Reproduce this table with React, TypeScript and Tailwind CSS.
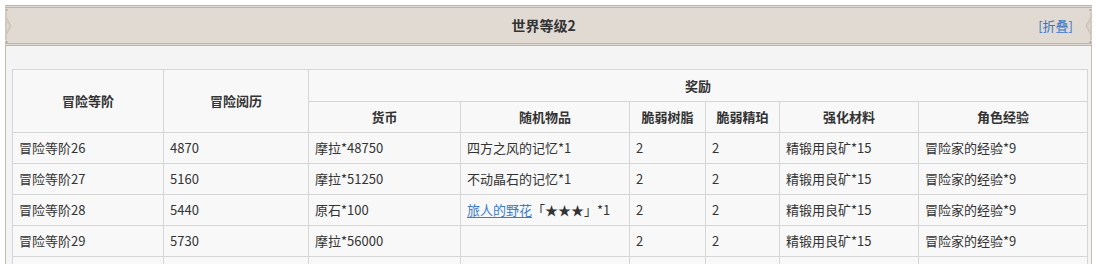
const cols = [151, 145, 152, 169, 76, 74, 139, 169];

type Row = {
  rank: string;
  exp: string;
  coin: string;
  item: React.ReactNode;
  resin: string;
  amber: string;
  ore: string;
  xp: string;
};

const rows: Row[] = [
  { rank: "冒险等阶26", exp: "4870", coin: "摩拉*48750", item: "四方之风的记忆*1", resin: "2", amber: "2", ore: "精锻用良矿*15", xp: "冒险家的经验*9" },
  { rank: "冒险等阶27", exp: "5160", coin: "摩拉*51250", item: "不动晶石的记忆*1", resin: "2", amber: "2", ore: "精锻用良矿*15", xp: "冒险家的经验*9" },
  {
    rank: "冒险等阶28",
    exp: "5440",
    coin: "原石*100",
    item: (
      <>
        <a className="text-[#3b7dc9] underline underline-offset-2">旅人的野花</a>
        <span>「★★★」*1</span>
      </>
    ),
    resin: "2",
    amber: "2",
    ore: "精锻用良矿*15",
    xp: "冒险家的经验*9",
  },
  { rank: "冒险等阶29", exp: "5730", coin: "摩拉*56000", item: "", resin: "2", amber: "2", ore: "精锻用良矿*15", xp: "冒险家的经验*9" },
];

const Corner = ({ flip }: { flip?: boolean }) => (
  <svg width="8" height="36" viewBox="0 0 8 36" className={flip ? "scale-x-[-1]" : ""}>
    <rect x="0.5" y="1" width="2" height="2" fill="#b9aa9b" />
    <rect x="0.5" y="33" width="2" height="2" fill="#b9aa9b" />
    <path d="M1 4 L1 32" stroke="#c4b6a8" strokeWidth="1" />
    <path d="M1.5 10 L6 18 L1.5 26" fill="none" stroke="#c9bcaf" strokeWidth="1" />
    <path d="M2 13 L4.5 18 L2 23" fill="none" stroke="#d3c8bc" strokeWidth="1" />
  </svg>
);

const th = "border border-[#d6d6d6] font-bold text-center align-middle";
const td = "border border-[#d6d6d6] px-[6px] align-middle whitespace-nowrap";

export default function App() {
  return (
    <div
      className="w-[1096px] h-[264px] overflow-hidden bg-white pt-[5px] text-[13px] text-[#333]"
      style={{ fontFamily: '"Noto Sans CJK SC", "Noto Sans", sans-serif' }}
    >
      <div className="mx-[5px] w-[1087px] border-x border-[#c7bbaf] bg-[#f4f4f4] pb-10">
        <div className="-mx-px h-[41px] border-y-[3px] border-double border-[#c2b4a6] bg-[#e0dad3] flex items-center">
          <Corner />
          <div className="flex-1 text-center font-bold text-[14px] text-[#333] pl-[36px]">世界等级2</div>
          <div className="text-[#3a76c6] text-[13px] pr-[11px]">[折叠]</div>
          <Corner flip />
        </div>
        <div className="pt-[23px] pl-[6px]">
          <table className="table-fixed border-collapse bg-[#f8f8f8]" style={{ width: 1075 }}>
            <colgroup>
              {cols.map((w, i) => (
                <col key={i} style={{ width: w }} />
              ))}
            </colgroup>
            <thead>
              <tr className="h-[32px]">
                <th rowSpan={2} className={th}>冒险等阶</th>
                <th rowSpan={2} className={th}>冒险阅历</th>
                <th colSpan={6} className={th}>奖励</th>
              </tr>
              <tr className="h-[31px]">
                <th className={th}>货币</th>
                <th className={th}>随机物品</th>
                <th className={th}>脆弱树脂</th>
                <th className={th}>脆弱精珀</th>
                <th className={th}>强化材料</th>
                <th className={th}>角色经验</th>
              </tr>
            </thead>
            <tbody>
              {rows.map((r) => (
                <tr key={r.rank} className="h-[31px]">
                  <td className={td}>{r.rank}</td>
                  <td className={td}>{r.exp}</td>
                  <td className={td}>{r.coin}</td>
                  <td className={td}>{r.item}</td>
                  <td className={td}>{r.resin}</td>
                  <td className={td}>{r.amber}</td>
                  <td className={td}>{r.ore}</td>
                  <td className={td}>{r.xp}</td>
                </tr>
              ))}
              <tr className="h-[31px]">
                {cols.map((_, i) => (
                  <td key={i} className={td}></td>
                ))}
              </tr>
            </tbody>
          </table>
        </div>
      </div>
    </div>
  );
}
